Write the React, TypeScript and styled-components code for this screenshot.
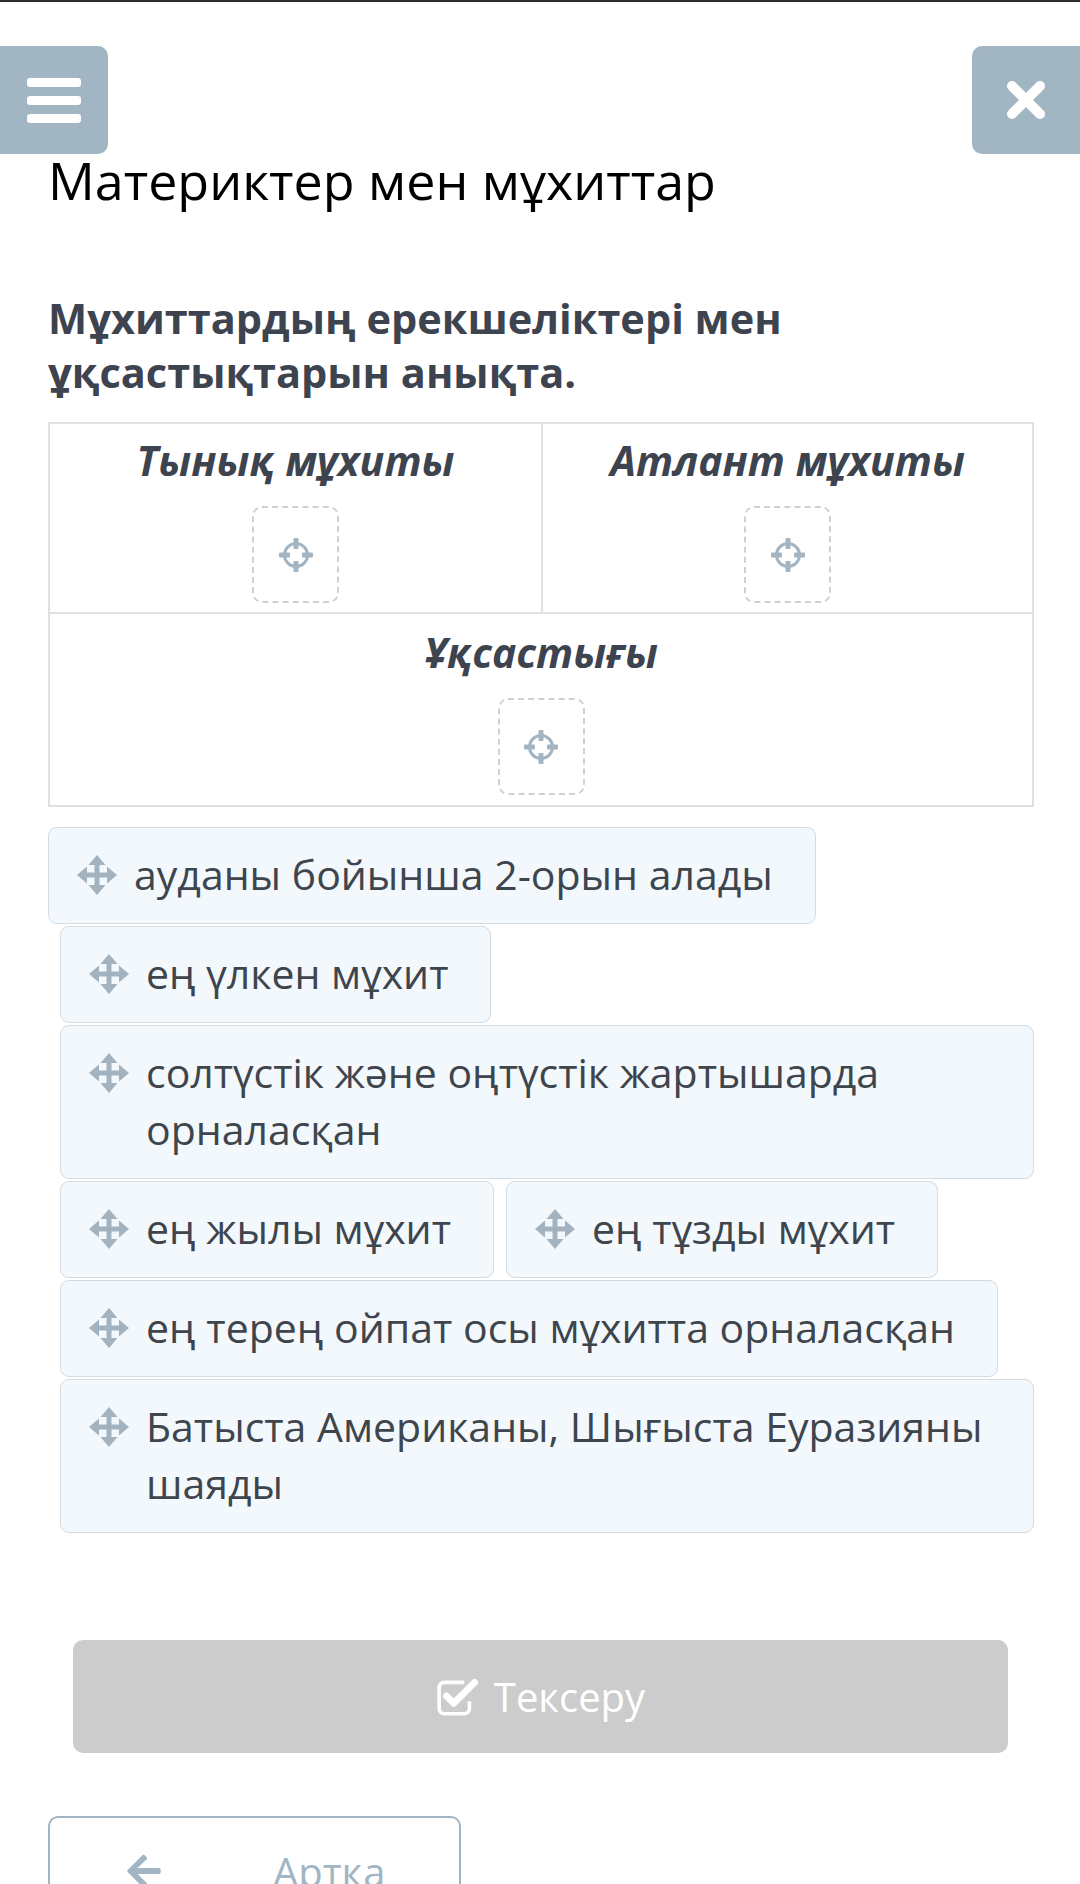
import React from "react";
import styled, { createGlobalStyle } from "styled-components";
import { FaArrowLeft } from "react-icons/fa";

const GlobalStyle = createGlobalStyle`
  html, body { margin: 0; padding: 0; background: #ffffff; }
  body { font-family: "Open Sans", "Noto Sans", sans-serif; }
  * { box-sizing: border-box; }
`;

const Page = styled.div`
  width: 1080px;
  min-height: 1884px;
  overflow: hidden;
  border-top: 2px solid #2e2e2e;
`;

const Header = styled.header`
  display: flex;
  justify-content: space-between;
  padding-top: 44px;
`;

const SideButton = styled.button<{ $side: "left" | "right" }>`
  width: 108px;
  height: 108px;
  border: none;
  padding: 0;
  background: #a2b5c2;
  border-radius: ${(p) => (p.$side === "left" ? "0 10px 10px 0" : "10px 0 0 10px")};
  display: flex;
  flex-direction: column;
  align-items: center;
  justify-content: center;
  gap: 9px;
`;

const Bar = styled.span`
  display: block;
  width: 54px;
  height: 9px;
  border-radius: 3px;
  background: #ffffff;
`;

const Content = styled.main`
  padding: 0 46px 0 48px;
`;

const Title = styled.h1`
  margin: -4px 0 0;
  font-size: 52px;
  font-weight: 400;
  line-height: 60px;
  color: #000000;
`;

const Question = styled.h2`
  margin: 81px 0 0;
  font-size: 41.5px;
  font-weight: 700;
  line-height: 54px;
  color: #3d4450;
`;

const Table = styled.div`
  margin-top: 23px;
  display: grid;
  grid-template-columns: 1fr 1fr;
  border: 2px solid #dde1e4;
`;

const Cell = styled.div<{ $wide?: boolean; $right?: boolean; $top?: boolean }>`
  grid-column: ${(p) => (p.$wide ? "1 / span 2" : "auto")};
  border-left: ${(p) => (p.$right ? "2px solid #dde1e4" : "none")};
  border-top: ${(p) => (p.$top ? "none" : "2px solid #dde1e4")};
  display: flex;
  flex-direction: column;
  align-items: center;
  padding: ${(p) => (p.$top ? "11px 0 9px" : "13px 0 10px")};
`;

const CellTitle = styled.div`
  font-size: 41px;
  font-weight: 700;
  font-style: italic;
  line-height: 50px;
  color: #3d4450;
  margin-bottom: 21px;
`;

const DropZone = styled.div`
  width: 87px;
  height: 97px;
  border: 2px dashed #d0d0d0;
  border-radius: 10px;
  display: flex;
  align-items: center;
  justify-content: center;
`;

const Items = styled.div`
  margin-top: 20px;
  display: flex;
  flex-wrap: wrap;
  row-gap: 2px;
`;

const Item = styled.div<{ $first?: boolean }>`
  margin-left: ${(p) => (p.$first ? "0" : "12px")};
  max-width: ${(p) => (p.$first ? "100%" : "calc(100% - 12px)")};
  display: flex;
  align-items: flex-start;
  gap: 17px;
  padding: 18px 42px 20px 28px;
  background: #f3f8fc;
  border: 1px solid #d3dbe1;
  border-radius: 9px;
  font-size: 41px;
  line-height: 57px;
  color: #3e454d;
`;

const IconSlot = styled.span`
  flex: none;
  height: 57px;
  display: flex;
  align-items: center;
`;

const Footer = styled.footer`
  padding: 0 72px 0 73px;
  margin-top: 107px;
`;

const CheckButton = styled.button`
  width: 100%;
  height: 113px;
  border: none;
  border-radius: 10px;
  background: #cccccc;
  color: #ffffff;
  font-family: "Open Sans", sans-serif;
  font-size: 40px;
  display: flex;
  align-items: center;
  justify-content: center;
  gap: 12px;
`;

const BackRow = styled.div`
  padding-left: 48px;
  margin-top: 63px;
`;

const BackButton = styled.button`
  width: 413px;
  height: 110px;
  border: 2px solid #a2b5c2;
  border-radius: 10px;
  background: #ffffff;
  color: #a2b5c2;
  font-family: "Open Sans", sans-serif;
  font-size: 40px;
  display: flex;
  align-items: center;
  padding: 0 0 0 75px;
  gap: 110px;
`;

const MoveIcon = () => (
  <svg width="40" height="40" viewBox="0 0 40 40" fill="#a3b2bf">
    <rect x="17.5" y="8" width="5" height="24" />
    <rect x="8" y="17.5" width="24" height="5" />
    <polygon points="20,0 11.5,10 28.5,10" />
    <polygon points="20,40 11.5,30 28.5,30" />
    <polygon points="0,20 10,11.5 10,28.5" />
    <polygon points="40,20 30,11.5 30,28.5" />
  </svg>
);

const CrossHair = () => (
  <svg width="36" height="36" viewBox="0 0 36 36" fill="#a3b5c3">
    <circle cx="18" cy="18" r="11.5" fill="none" stroke="#a3b5c3" strokeWidth="3" />
    <rect x="15.5" y="1" width="5" height="11" rx="1" />
    <rect x="15.5" y="24" width="5" height="11" rx="1" />
    <rect x="1" y="15.5" width="11" height="5" rx="1" />
    <rect x="24" y="15.5" width="11" height="5" rx="1" />
  </svg>
);

const CloseIcon = () => (
  <svg width="42" height="40" viewBox="0 0 42 40">
    <path d="M7 6 L35 34 M35 6 L7 34" stroke="#ffffff" strokeWidth="10" strokeLinecap="round" />
  </svg>
);

const CheckSquareIcon = () => (
  <svg width="46" height="40" viewBox="0 0 44 38" fill="none">
    <path
      d="M27 5 H8 A5 5 0 0 0 3 10 V30 A5 5 0 0 0 8 35 H27 A5 5 0 0 0 32 30 V23"
      stroke="#ffffff"
      strokeWidth="3.5"
    />
    <path d="M10 18 L17 25 L37 5" stroke="#ffffff" strokeWidth="6.5" strokeLinecap="round" strokeLinejoin="round" />
  </svg>
);

const items = [
  "ауданы бойынша 2-орын алады",
  "ең үлкен мұхит",
  "солтүстік және оңтүстік жартышарда орналасқан",
  "ең жылы мұхит",
  "ең тұзды мұхит",
  "ең терең ойпат осы мұхитта орналасқан",
  "Батыста Американы, Шығыста Еуразияны шаяды",
];

export default function App() {
  return (
    <>
      <GlobalStyle />
      <Page>
        <Header>
          <SideButton $side="left" aria-label="menu">
            <Bar />
            <Bar />
            <Bar />
          </SideButton>
          <SideButton $side="right" aria-label="close">
            <CloseIcon />
          </SideButton>
        </Header>
        <Content>
          <Title>Материктер мен мұхиттар</Title>
          <Question>
            Мұхиттардың ерекшеліктері мен
            <br />
            ұқсастықтарын анықта.
          </Question>
          <Table>
            <Cell $top>
              <CellTitle>Тынық мұхиты</CellTitle>
              <DropZone>
                <CrossHair />
              </DropZone>
            </Cell>
            <Cell $top $right>
              <CellTitle>Атлант мұхиты</CellTitle>
              <DropZone>
                <CrossHair />
              </DropZone>
            </Cell>
            <Cell $wide>
              <CellTitle>Ұқсастығы</CellTitle>
              <DropZone>
                <CrossHair />
              </DropZone>
            </Cell>
          </Table>
          <Items>
            {items.map((t, i) => (
              <Item key={t} $first={i === 0}>
                <IconSlot>
                  <MoveIcon />
                </IconSlot>
                <span>{t}</span>
              </Item>
            ))}
          </Items>
        </Content>
        <Footer>
          <CheckButton>
            <CheckSquareIcon />
            <span>Тексеру</span>
          </CheckButton>
        </Footer>
        <BackRow>
          <BackButton>
            <FaArrowLeft size={38} />
            <span>Артқа</span>
          </BackButton>
        </BackRow>
      </Page>
    </>
  );
}
